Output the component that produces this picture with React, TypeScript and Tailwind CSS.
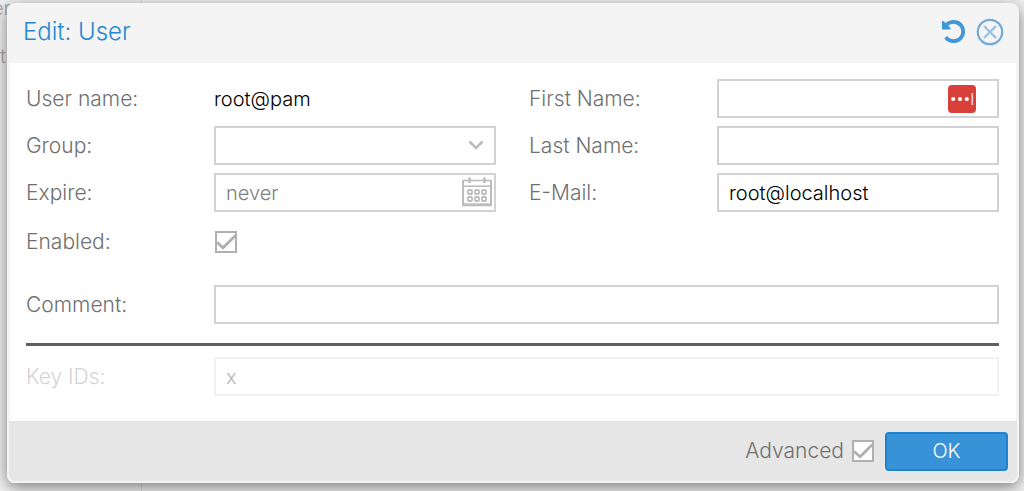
import { useState } from "react";
import type { InputHTMLAttributes, ReactNode } from "react";
import clsx from "clsx";

interface FieldProps {
  id: string;
  label: string;
  disabled?: boolean;
  children: ReactNode;
}

const fieldClass =
  "block w-full h-[39px] rounded-none border-2 border-[#d2d2d2] bg-white px-[10px] text-xl font-light text-black placeholder:text-[#808080] focus:outline-none focus:border-[#3892d4]";

function Field({ id, label, disabled, children }: FieldProps) {
  return (
    <div className={clsx("flex items-center min-h-[39px]", disabled && "opacity-30")}>
      <label htmlFor={id} className="w-[188px] shrink-0 text-[#707070]">
        {label}
      </label>
      <div className="relative flex-1 min-w-0">{children}</div>
    </div>
  );
}

function CheckBox(props: InputHTMLAttributes<HTMLInputElement>) {
  return (
    <span className="relative block w-[22px] h-[22px]">
      <input
        type="checkbox"
        className="peer block appearance-none w-[22px] h-[22px] border-2 border-[#b0b0b0] bg-white"
        {...props}
      />
      <svg
        viewBox="0 0 22 22"
        className="absolute inset-0 pointer-events-none opacity-0 peer-checked:opacity-100"
        fill="none"
        stroke="#b0b0b0"
        strokeWidth="2.8"
      >
        <path d="M2 11.2 L8 16.8 L20.5 4.5" />
      </svg>
    </span>
  );
}

function UndoIcon() {
  return (
    <svg viewBox="0 0 1792 1792" className="w-[27px] h-[27px]" fill="currentColor">
      <path d="M1664 896q0 156-61 298t-164 245-245 164-298 61q-172 0-327-72.5t-264-204.5q-7-10-6.5-22.5t8.5-20.5l137-138q10-9 25-9 16 2 23 12 73 95 179 147t225 52q104 0 198.5-40.5t163.5-109.5 109.5-163.5 40.5-198.5-40.5-198.5-109.5-163.5-163.5-109.5-198.5-40.5q-98 0-188 35.5t-160 101.5l137 138q31 30 14 69-17 40-59 40h-448q-26 0-45-19t-19-45v-448q0-42 40-59 39-17 69 14l130 129q107-101 244.5-156.5t284.5-55.5q156 0 298 61t245 164 164 245 61 298z" />
    </svg>
  );
}

function CloseIcon() {
  return (
    <svg viewBox="0 0 28 28" className="w-7 h-7" fill="none">
      <circle cx="14" cy="14" r="12.2" stroke="#74acd6" strokeWidth="2.2" />
      <path d="M8 8 L20 20 M20 8 L8 20" stroke="#97c1e5" strokeWidth="2.4" />
    </svg>
  );
}

function CalendarIcon() {
  return (
    <svg viewBox="0 0 30 30" className="w-[30px] h-[30px]" fill="none" stroke="#bcbcbc">
      <path d="M1 3.5 H29" strokeWidth="1.6" />
      <path d="M1 3 V28 M29 3 V28" strokeWidth="2" />
      <path d="M1 9.2 H29" strokeWidth="1.6" />
      <path d="M0 27.8 H30" strokeWidth="3" />
      <path d="M7.5 0.5 V6 M22.5 0.5 V6" strokeWidth="2.6" />
      <g strokeWidth="1.8">
        <rect x="6" y="13" width="4" height="4" rx="1" />
        <rect x="13" y="13" width="4" height="4" rx="1" />
        <rect x="20" y="13" width="4" height="4" rx="1" />
        <rect x="6" y="20" width="4" height="4" rx="1" />
        <rect x="13" y="20" width="4" height="4" rx="1" />
        <rect x="20" y="20" width="4" height="4" rx="1" />
      </g>
    </svg>
  );
}

function PasswordManagerIcon() {
  return (
    <svg viewBox="0 0 28 28" className="w-7 h-7">
      <rect width="28" height="28" rx="4" fill="#d9403a" />
      <circle cx="5.2" cy="14" r="2.1" fill="#fff" />
      <circle cx="12" cy="14" r="2.1" fill="#fff" />
      <circle cx="18.8" cy="14" r="2.1" fill="#fff" />
      <path d="M24.3 8 V20" stroke="#f6cfcd" strokeWidth="1.6" />
    </svg>
  );
}

export default function App() {
  const [group, setGroup] = useState("");
  const [enabled, setEnabled] = useState(true);
  const [advanced, setAdvanced] = useState(true);

  return (
    <div className="relative min-h-screen overflow-hidden bg-[#ededed] pt-[3px] pb-[9px] pl-[7px] pr-[5px] font-['Inter','Liberation_Sans',sans-serif] font-light text-[21px] leading-7">
      {/* page behind the dialog */}
      <div className="absolute inset-0 flex text-[#a8a8a8] text-xl leading-6" aria-hidden="true">
        <div className="w-[142px] shrink-0 border-r border-[#dcdcdc] bg-[#f2f2f2]">
          <div className="flex flex-col gap-6 -mt-1">
            <span className="-ml-2">er</span>
            <span>te</span>
          </div>
        </div>
        <div className="flex-1 bg-[#f3f3f3]" />
      </div>

      <form
        role="dialog"
        aria-labelledby="dialog-title"
        onSubmit={(e) => e.preventDefault()}
        className="relative rounded-lg bg-[#f4f4f4] shadow-[0_4px_16px_rgba(0,0,0,0.5)]"
      >
        <header className="flex items-center justify-between h-[60px] pl-4 pr-[15px] pb-[3px]">
          <h1 id="dialog-title" className="text-2xl font-light text-[#2489d2]">Edit: User</h1>
          <div className="flex items-center gap-[9px] text-[#3f97d8]">
            <button type="reset" aria-label="Reset"><UndoIcon /></button>
            <button type="button" aria-label="Close"><CloseIcon /></button>
          </div>
        </header>

        <div className="mx-[3px] bg-white pt-4 pb-[25px] pl-4 pr-[17px]">
          <div className="grid grid-cols-2 gap-x-[33px]">
            <div className="flex flex-col gap-2">
              <Field id="userid" label="User name:">
                <output id="userid" className="block text-xl leading-7 text-black">root@pam</output>
              </Field>
              <Field id="group" label="Group:">
                <select
                  id="group"
                  value={group}
                  onChange={(e) => setGroup(e.target.value)}
                  className={clsx(fieldClass, "appearance-none")}
                >
                  <option value=""></option>
                </select>
                <svg
                  viewBox="0 0 16 10"
                  className="absolute right-3 top-[14px] w-4 h-[10px] pointer-events-none"
                  fill="none"
                  stroke="#bbbbbb"
                  strokeWidth="2.6"
                >
                  <path d="M1.5 1.5 L8 8 L14.5 1.5" />
                </svg>
              </Field>
              <Field id="expire" label="Expire:">
                <input id="expire" type="text" placeholder="never" className={fieldClass} />
                <button type="button" aria-label="Pick a date" className="absolute right-1 top-1">
                  <CalendarIcon />
                </button>
              </Field>
            </div>
            <div className="flex flex-col gap-2">
              <Field id="firstname" label="First Name:">
                <input id="firstname" type="text" className={fieldClass} />
                <span className="absolute right-[23px] top-[6px]"><PasswordManagerIcon /></span>
              </Field>
              <Field id="lastname" label="Last Name:">
                <input id="lastname" type="text" className={fieldClass} />
              </Field>
              <Field id="email" label="E-Mail:">
                <input id="email" type="email" defaultValue="root@localhost" className={fieldClass} />
              </Field>
            </div>
          </div>

          <div className="mt-[10px] mb-6">
            <Field id="enabled" label="Enabled:">
              <div className="pl-px">
                <CheckBox id="enabled" checked={enabled} onChange={(e) => setEnabled(e.target.checked)} />
              </div>
            </Field>
          </div>

          <Field id="comment" label="Comment:">
            <input id="comment" type="text" className={fieldClass} />
          </Field>

          <hr className="mt-[19px] mb-[11px] border-0 h-[3px] bg-[#606060]" />

          <Field id="keys" label="Key IDs:" disabled>
            <input id="keys" type="text" defaultValue="x" disabled className={fieldClass} />
          </Field>
        </div>

        <footer className="flex items-center justify-end h-[62px] rounded-b-lg border-2 border-t-0 border-[#f4f4f4] bg-[#e6e6e6] pr-[9px]">
          <label htmlFor="advanced" className="mr-2 text-[#707070]">Advanced</label>
          <CheckBox id="advanced" checked={advanced} onChange={(e) => setAdvanced(e.target.checked)} />
          <button
            type="submit"
            className="ml-[11px] w-[123px] h-[39px] rounded border-2 border-[#1f82cf] bg-[#3892d8] text-xl leading-6 font-light text-white hover:bg-[#2f86ca]"
          >
            OK
          </button>
        </footer>
      </form>
    </div>
  );
}
